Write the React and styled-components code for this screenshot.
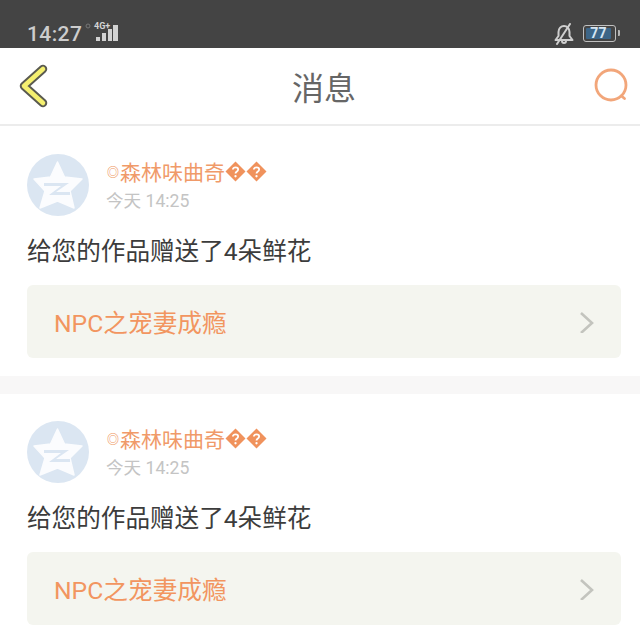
import React from "react";
import styled, { createGlobalStyle } from "styled-components";

const Global = createGlobalStyle`
  html, body { margin: 0; padding: 0; background: #fff; }
  body { font-family: "Roboto", "Noto Sans CJK SC", sans-serif; }
`;
const Page = styled.div`
  width: 640px; height: 639px; overflow: hidden; background: #fff;
  display: flex; flex-direction: column;
`;
const StatusBar = styled.div`
  height: 48px; flex: none; background: #444444; box-sizing: border-box;
  padding: 19px 20px 0 27px; display: flex; align-items: center; justify-content: space-between;
  color: #c8c8c8;
`;
const StatusGroup = styled.div`display: flex; align-items: center;`;
const Clock = styled.span`
  font: 500 21px/28px "Roboto", sans-serif; letter-spacing: 0.4px; color: #cdcdcd; width: 58px; box-sizing: border-box;
`;
const SignalIcon = styled.svg`margin-top: -1px;`;
const Header = styled.div`
  height: 78px; flex: none; box-sizing: border-box; border-bottom: 2px solid #ececec;
  display: flex; align-items: center; justify-content: space-between; padding: 0 10px 0 18px;
`;
const Title = styled.div`
  font: 400 32px/40px "Noto Sans CJK SC", sans-serif; color: #666666; margin: -1px 0 0 6px;
`;
const Card = styled.section`
  flex: none; box-sizing: border-box; padding: ${p => p.$top}px 19px 0 27px; height: ${p => p.$height}px;
`;
const Divider = styled.div`height: 18px; flex: none; background: #f8f7f7;`;
const UserRow = styled.div`display: flex; align-items: center; gap: 18px; height: 62px;`;
const Avatar = styled.div`width: 62px; height: 62px; flex: none;`;
const UserText = styled.div`display: flex; flex-direction: column;`;
const Name = styled.div`
  font: 400 21px/30px "Noto Sans CJK SC", sans-serif; color: #f09a69; display: flex; align-items: center; height: 30px; margin-top: -1px;
`;
const Ring = styled.span`font-size: 12px; font-weight: 700; line-height: 30px; margin-right: 1px; margin-top: 2px; color: #ee9560;`;
const Time = styled.div`
  font: 400 17.6px/24px "Roboto", "Noto Sans CJK SC", sans-serif; color: #c4c4c4; margin: 3px 0 0 -1px;
`;
const Message = styled.div`
  font: 400 24.6px/34px "Roboto", "Noto Sans CJK SC", sans-serif; color: #3c3c3c; margin-top: 19px;
`;
const LinkBox = styled.div`
  margin-top: 16px; height: 73px; background: #f4f5ef; border-radius: 6px; box-sizing: border-box;
  padding: 0 26px 0 27px; display: flex; align-items: center; justify-content: space-between;
`;
const LinkText = styled.span`
  font: 400 24.7px/32px "Roboto", "Noto Sans CJK SC", sans-serif; color: #f29560; margin-top: 4px;
`;

const Signal = () => (
  <SignalIcon width="34" height="26" viewBox="0 0 34 26">
    <text x="9" y="9" fontFamily="Roboto, sans-serif" fontSize="9" fontWeight="700" fill="#d4d4d4">4G+</text>
    <circle cx="3" cy="6" r="2" fill="none" stroke="#777" strokeWidth="1" />
    <g fill="#d2d2d2">
      <rect x="11" y="17" width="4" height="4" />
      <rect x="17" y="13" width="4" height="8" />
      <rect x="23" y="9" width="4" height="12" />
      <rect x="28" y="5" width="5" height="16" />
    </g>
  </SignalIcon>
);
const BellOff = () => (
  <svg width="20" height="22" viewBox="0 0 20 22" fill="none" stroke="#cfcfcf" strokeWidth="2" strokeLinecap="round" strokeLinejoin="round">
    <path d="M1.5 17 H18.5 L15.5 13 V9 C15.5 5.5 13 3 10 3 C7 3 4.5 5.5 4.5 9 V13 Z" />
    <path d="M8 18 A2 2 0 0 0 12 18" />
    <path d="M16 1 L3 21" />
  </svg>
);
const BatteryWrap = styled.div`
  width: 33px; height: 17px; border: 1px solid #c0c0c0; border-radius: 3px; box-sizing: border-box; padding: 2px;
  position: relative; display: flex; margin-left: 9px; margin-right: 4px;
`;
const BatteryFill = styled.div`
  background: #3c6587; border-radius: 1px; color: #d7e6f2; font: 700 14px/11px "Roboto", sans-serif;
  text-align: center; flex: none; letter-spacing: 0.3px;
`;
const BatteryTip = styled.span`
  position: absolute; right: -5px; top: 4px; width: 2px; height: 6px; background: #b5b5b5; border-radius: 0 1px 1px 0;
`;
const Battery = () => (
  <BatteryWrap>
    <BatteryFill style={{ width: `${Math.round(0.77 * 33)}px` }}>77</BatteryFill>
    <BatteryTip />
  </BatteryWrap>
);
const Back = () => (
  <svg width="30" height="44" viewBox="0 0 30 44" fill="none" strokeLinecap="round" strokeLinejoin="round">
    <path d="M25 5 L6 22 L25 39" stroke="#5a5a50" strokeWidth="8.5" />
    <path d="M25 5 L6 22 L25 39" stroke="#f5f070" strokeWidth="4.6" />
  </svg>
);
const Search = () => (
  <svg width="36" height="36" viewBox="0 0 36 36" fill="none" stroke="#f2a67a" strokeWidth="2.8" strokeLinecap="round">
    <circle cx="17" cy="17" r="15" />
    <path d="M27.5 28 L30.5 30.5" />
  </svg>
);
const QQAvatar = () => (
  <svg width="62" height="62" viewBox="0 0 62 62">
    <circle cx="31" cy="31" r="31" fill="#dbe6f2" />
    <path d="M30.5 8 L37.5 23 L55 25 L43 37 L47 54 L30.5 47 L13 54 L18 37 L7 25 L23.5 23 Z" fill="#fbfcfe" strokeLinejoin="round" stroke="#fbfcfe" strokeWidth="1.5" />
    <path d="M17 29 H42 L29 38 H43 V41 H22 L34 32 H17 Z" fill="#dbe6f2" />
  </svg>
);
const Chevron = () => (
  <svg width="16" height="22" viewBox="0 0 16 22" fill="none" stroke="#c3c4be" strokeWidth="2.6">
    <path d="M2 2 L13 12 L2 22" />
  </svg>
);
const Unknown = styled.svg`flex: none;`;
const Replacement = () => (
  <Unknown width="21" height="21" viewBox="0 0 20 20">
    <path d="M10 0.5 L19.5 10 L10 19.5 L0.5 10 Z" fill="#f0925c" />
    <path d="M7.5 8 C7.5 5.5 12.5 5.5 12.5 8 C12.5 10 10 10 10 12" fill="none" stroke="#fff" strokeWidth="1.7" />
    <circle cx="10" cy="14.5" r="1.1" fill="#fff" />
  </Unknown>
);

const Notice = ({ top, height }) => (
  <Card $top={top} $height={height}>
    <UserRow>
      <Avatar><QQAvatar /></Avatar>
      <UserText>
        <Name><Ring>◎</Ring>森林味曲奇<Replacement /><Replacement /></Name>
        <Time>今天 14:25</Time>
      </UserText>
    </UserRow>
    <Message>给您的作品赠送了4朵鲜花</Message>
    <LinkBox>
      <LinkText>NPC之宠妻成瘾</LinkText>
      <Chevron />
    </LinkBox>
  </Card>
);

export default function App() {
  return (
    <Page>
      <Global />
      <StatusBar>
        <StatusGroup><Clock>14:27</Clock><Signal /></StatusGroup>
        <StatusGroup><BellOff /><Battery /></StatusGroup>
      </StatusBar>
      <Header>
        <Back />
        <Title>消息</Title>
        <Search />
      </Header>
      <Notice top={28} height={250} />
      <Divider />
      <Notice top={27} height={245} />
    </Page>
  );
}
